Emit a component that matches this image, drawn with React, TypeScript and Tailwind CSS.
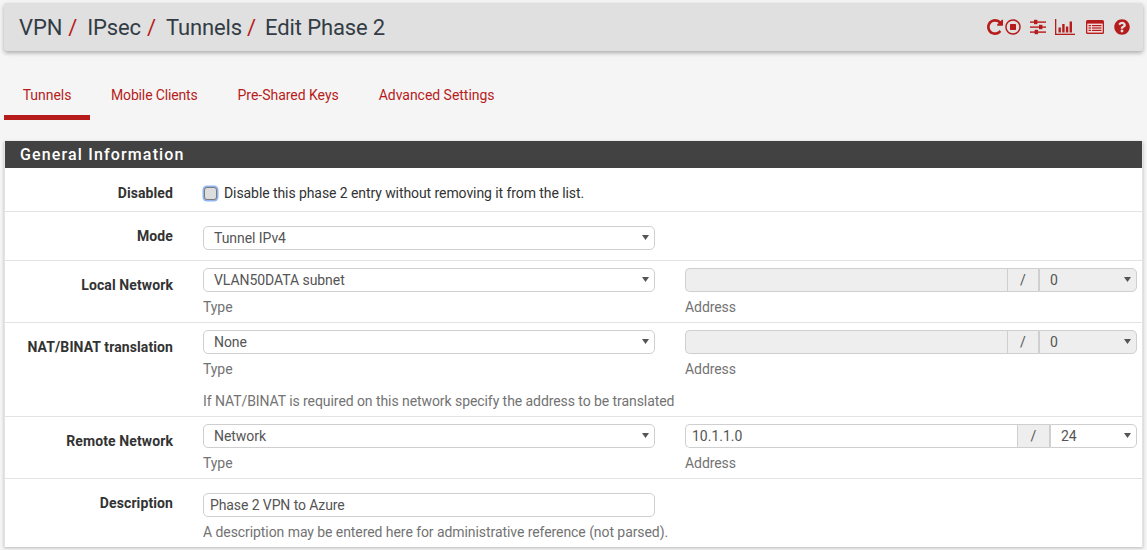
import React from "react";
import { FaRegStopCircle, FaQuestionCircle } from "react-icons/fa";

const RED = "#b71c1c";

function RepeatIcon() {
  return (
    <svg width="16" height="16" viewBox="128 128 1536 1536" fill={RED} className="mr-[2px]">
      <path d="M1664 256v448q0 26-19 45t-45 19h-448q-42 0-59-40-17-39 14-69l138-138q-148-137-349-137-104 0-198.5 40.5t-163.5 109.5-109.5 163.5-40.5 198.5 40.5 198.5 109.5 163.5 163.5 109.5 198.5 40.5q119 0 225-52t179-147q7-10 23-12 15 0 25 9l137 138q9 8 9.5 20.5t-7.5 22.5q-109 132-264 204.5t-327 72.5q-156 0-298-61t-245-164-164-245-61-298 61-298 164-245 245-164 298-61q147 0 284.5 55.5t244.5 156.5l130-129q29-31 70-14 39 17 39 59z" />
    </svg>
  );
}

function SlidersIcon() {
  return (
    <svg width="16" height="16" viewBox="0 0 16 16" fill={RED} className="ml-[9px]">
      <rect x="0" y="2.4" width="16" height="1.4" />
      <rect x="0" y="7.4" width="16" height="1.4" />
      <rect x="0" y="12.4" width="16" height="1.4" />
      <rect x="4" y="0.8" width="3.4" height="4.4" />
      <rect x="9" y="5.8" width="3.4" height="4.4" />
      <rect x="4.6" y="10.8" width="3.4" height="4.4" />
    </svg>
  );
}

function ChartIcon() {
  return (
    <svg width="20" height="16" viewBox="0 0 20 16" fill={RED}>
      <rect x="0" y="0" width="1.3" height="16" />
      <rect x="0" y="14.7" width="20" height="1.3" />
      <rect x="3.5" y="8.5" width="2.4" height="5" />
      <rect x="7.2" y="5" width="2.4" height="8.5" />
      <rect x="10.9" y="7.5" width="2.4" height="6" />
      <rect x="14.6" y="2.5" width="2.4" height="11" />
    </svg>
  );
}

function ListIcon() {
  return (
    <svg width="18" height="14" viewBox="0 0 18 14">
      <rect x="0" y="0" width="18" height="14" rx="1.5" fill={RED} />
      <rect x="1.3" y="3.6" width="15.4" height="9" fill="#f0dcdc" />
      <rect x="2.5" y="5" width="2.5" height="1.2" fill={RED} />
      <rect x="2.5" y="7.4" width="2.5" height="1.2" fill={RED} />
      <rect x="2.5" y="9.8" width="2.5" height="1.2" fill={RED} />
      <rect x="6" y="5" width="9.5" height="1.2" fill={RED} />
      <rect x="6" y="7.4" width="9.5" height="1.2" fill={RED} />
      <rect x="6" y="9.8" width="9.5" height="1.2" fill={RED} />
    </svg>
  );
}

function Arrow() {
  return (
    <svg
      width="7"
      height="5"
      viewBox="0 0 7 5"
      className="pointer-events-none absolute right-[6px] top-[9px]"
      fill="#555555"
    >
      <path d="M0 0H7L3.5 5Z" />
    </svg>
  );
}

function Select({ value }: { value: string }) {
  return (
    <div className="relative h-6 w-full">
      <select
        defaultValue={value}
        className="block h-6 w-full appearance-none rounded-[5px] border border-[#cfcfcf] bg-white pl-[10px] text-[14px] tracking-[-0.06px] text-[#555555]"
      >
        <option>{value}</option>
      </select>
      <Arrow />
    </div>
  );
}

function Help({ children }: { children: React.ReactNode }) {
  return (
    <div className="mt-[5px] h-5 whitespace-nowrap text-[14px] leading-5 tracking-[-0.07px] text-[#737373]">
      {children}
    </div>
  );
}

function AddressGroup({ value, mask, disabled }: { value?: string; mask: string; disabled?: boolean }) {
  return (
    <div className="flex h-6 w-full">
      <input
        readOnly
        value={value ?? ""}
        className={`block h-6 min-w-0 flex-1 rounded-l-[5px] border border-r-0 border-[#cfcfcf] px-[6px] text-[14px] text-[#555555] outline-none ${
          disabled ? "bg-[#eeeeee]" : "bg-white"
        }`}
      />
      <div
        className={`flex h-6 items-center justify-center border border-[#cfcfcf] bg-[#eeeeee] text-[14px] text-[#555555] ${
          disabled ? "w-8" : "w-[33px]"
        }`}
      >
        /
      </div>
      <div className={`relative h-6 ${disabled ? "w-[98px]" : "w-[87px]"}`}>
        <select
          defaultValue={mask}
          disabled={disabled}
          className={`block h-6 w-full appearance-none rounded-r-[5px] border border-[#cfcfcf] pl-[10px] text-[14px] text-[#555555] opacity-100 ${
            disabled ? "bg-[#eeeeee]" : "bg-white"
          }`}
        >
          <option>{mask}</option>
        </select>
        <Arrow />
      </div>
    </div>
  );
}

function Row({
  label,
  labelTop,
  className,
  children,
}: {
  label: string;
  labelTop: string;
  className: string;
  children: React.ReactNode;
}) {
  return (
    <div className={`flex border-b border-[#e3e3e3] ${className}`}>
      <div className={`w-[168px] text-right text-[14px] font-bold leading-5 tracking-[0.1px] text-[#333333] ${labelTop}`}>
        {label}
      </div>
      <div className="ml-[30px] flex flex-1 gap-[30px]">{children}</div>
    </div>
  );
}

function Col({ children }: { children: React.ReactNode }) {
  return <div className="w-[452px]">{children}</div>;
}

function Crumb({ children, gap, after }: { children: string; gap?: string; after?: string }) {
  return (
    <span className={`flex ${after ?? ""}`}>
      {children}
      {gap && <span className={`${gap} text-[#b71c1c]`}>/</span>}
    </span>
  );
}

export default function App() {
  return (
    <div
      className="h-[550px] w-[1147px] overflow-hidden bg-[#f5f5f5] px-1 pt-[3px]"
      style={{ fontFamily: "Roboto, sans-serif" }}
    >
      <div className="flex h-[48px] items-center justify-between rounded-[3px] bg-[#e0e0e0] pl-[15px] pr-[13px] shadow-[0_2px_4px_rgba(0,0,0,0.3)]">
        <div className="flex text-[22px] font-normal tracking-[-0.12px] text-[#333c45]">
          <Crumb gap="ml-[6px]" after="mr-[10px]">VPN</Crumb>
          <Crumb gap="ml-[6px]" after="mr-[10px]">IPsec</Crumb>
          <Crumb gap="ml-[5px]" after="mr-[9px]">Tunnels</Crumb>
          <Crumb>Edit Phase 2</Crumb>
        </div>
        <div className="flex items-center text-[#b71c1c]">
          <RepeatIcon />
          <FaRegStopCircle size={16} />
          <SlidersIcon />
          <span className="ml-[9px]">
            <ChartIcon />
          </span>
          <span className="ml-[11px]">
            <ListIcon />
          </span>
          <FaQuestionCircle size={16} className="ml-[10px]" />
        </div>
      </div>

      <div className="mt-[19px] flex h-[50px] text-[14px] tracking-[-0.03px] text-[#b71c1c]">
        <div className="flex h-full w-[86px] justify-center border-b-[5px] border-[#b71c1c] pt-[15px] leading-5">Tunnels</div>
        <div className="flex h-full justify-center pl-[21px] pr-5 pt-[15px] leading-5 tracking-[-0.15px]">Mobile Clients</div>
        <div className="flex h-full justify-center px-5 pt-[15px] leading-5">Pre-Shared Keys</div>
        <div className="flex h-full justify-center px-5 pt-[15px] leading-5">Advanced Settings</div>
      </div>

      <div className="mt-[21px] border-x border-[#e3e3e3] bg-white shadow-[0_1px_3px_rgba(0,0,0,0.25)]">
        <div className="flex h-[27px] items-center bg-[#424242] pl-[15px] text-[16px] font-medium tracking-[1.15px] text-white">
          General Information
        </div>
        <Row label="Disabled" labelTop="pt-[15px]" className="h-[44px]">
          <label className="flex items-start pt-[15px] text-[14px] leading-5 tracking-[-0.08px] text-[#333333]">
            <span className="ml-px mr-[7px] mt-[4px] h-[13px] w-[13px] rounded-[3px] border border-[#7b7b7b] bg-[#dddddd] shadow-[0_0_0_1.5px_#8fb4f0]" />
            Disable this phase 2 entry without removing it from the list.
          </label>
        </Row>
        <Row label="Mode" labelTop="pt-[14px]" className="h-[49px] pt-0">
          <Col>
            <div className="pt-[14px]">
              <Select value="Tunnel IPv4" />
            </div>
          </Col>
        </Row>
        <Row label="Local Network" labelTop="pt-[14px]" className="h-[62px]">
          <Col>
            <div className="pt-[7px]">
              <Select value="VLAN50DATA subnet" />
              <Help>Type</Help>
            </div>
          </Col>
          <Col>
            <div className="pt-[7px]">
              <AddressGroup mask="0" disabled />
              <Help>Address</Help>
            </div>
          </Col>
        </Row>
        <Row label="NAT/BINAT translation" labelTop="pt-[14px]" className="h-[94px]">
          <Col>
            <div className="pt-[7px]">
              <Select value="None" />
              <Help>Type</Help>
              <div className="mt-3 whitespace-nowrap text-[14px] leading-5 tracking-[-0.07px] text-[#737373]">
                If NAT/BINAT is required on this network specify the address to be translated
              </div>
            </div>
          </Col>
          <Col>
            <div className="pt-[7px]">
              <AddressGroup mask="0" disabled />
              <Help>Address</Help>
            </div>
          </Col>
        </Row>
        <Row label="Remote Network" labelTop="pt-[14px]" className="h-[62px]">
          <Col>
            <div className="pt-[7px]">
              <Select value="Network" />
              <Help>Type</Help>
            </div>
          </Col>
          <Col>
            <div className="pt-[7px]">
              <AddressGroup value="10.1.1.0" mask="24" />
              <Help>Address</Help>
            </div>
          </Col>
        </Row>
        <div className="flex h-[68px]">
          <div className="w-[168px] pt-[14px] text-right text-[14px] font-bold leading-5 tracking-[0.1px] text-[#333333]">
            Description
          </div>
          <div className="ml-[30px] w-[452px] pt-[14px]">
            <input
              readOnly
              value="Phase 2 VPN to Azure"
              className="block h-6 w-full rounded-[5px] border border-[#cfcfcf] px-[6px] text-[14px] tracking-[-0.1px] text-[#555555] outline-none"
            />
            <Help>A description may be entered here for administrative reference (not parsed).</Help>
          </div>
        </div>
      </div>
    </div>
  );
}
